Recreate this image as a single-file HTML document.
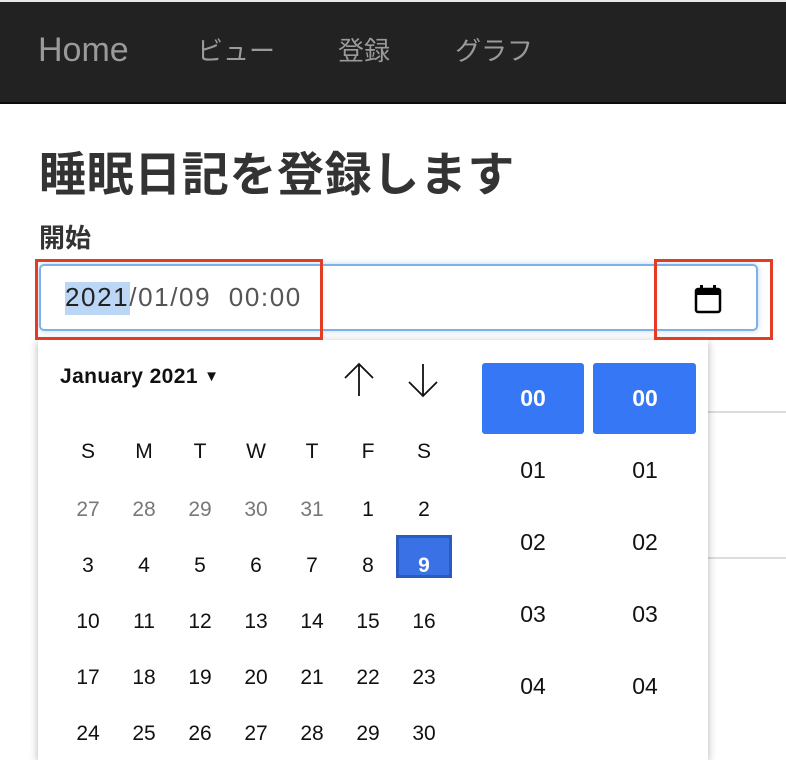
<!DOCTYPE html>
<html><head><meta charset="utf-8"><style>
*{margin:0;padding:0;box-sizing:border-box}
body{width:786px;height:748px;overflow:hidden;background:#fff;font-family:"Liberation Sans","Noto Sans CJK JP",sans-serif;position:relative}
.a{position:absolute;white-space:nowrap}
.nav{position:absolute;left:0;top:2px;width:786px;height:102px;background:#222;border-bottom:2px solid #0a0a0a}
.top{position:absolute;left:0;top:0;width:786px;height:3px;background:#e8e8e8}
.n{color:#9a9a9a;font-size:26px;top:29px}
.d{width:40px;text-align:center;font-size:21px;color:#111}
.g{color:#777}
.t{width:102px;text-align:center;font-size:23px;color:#111}
</style></head><body>
<div class="top"></div>
<div class="nav">
<div class="a n" style="left:38px;top:29px;font-size:34px">Home</div>
<div class="a n" style="left:197px">ビュー</div>
<div class="a n" style="left:338px">登録</div>
<div class="a n" style="left:455px">グラフ</div>
</div>
<div class="a" style="left:39px;top:136px;font-size:47px;font-weight:bold;color:#333;letter-spacing:0.6px">睡眠日記を登録します</div>
<div class="a" style="left:39px;top:218px;font-size:26px;font-weight:bold;color:#333">開始</div>
<div class="a" style="left:708px;top:411px;width:78px;height:2px;background:#ddd"></div>
<div class="a" style="left:708px;top:557px;width:78px;height:2px;background:#ddd"></div>
<div class="a" style="left:39px;top:264px;width:719px;height:67px;border:2px solid #7fb0e8;border-radius:5px;box-shadow:0 0 6px rgba(120,170,230,.5)"></div>
<div class="a" style="left:65px;top:282px;width:65px;height:33px;background:#bcd6f6"></div>
<div class="a" style="left:65px;top:282px;font-size:26px;color:#222;letter-spacing:1.6px">2021<span style="color:#555">/01/09&nbsp;&nbsp;00:00</span></div>
<svg class="a" style="left:694px;top:284px" width="28" height="30" viewBox="0 0 28 30"><rect x="2" y="5" width="24" height="23" rx="2" fill="none" stroke="#000" stroke-width="2.5"/><rect x="2" y="5" width="24" height="6" fill="#000"/><rect x="6" y="1" width="3" height="6" fill="#000"/><rect x="19" y="1" width="3" height="6" fill="#000"/></svg>
<div class="a" style="left:38px;top:340px;width:670px;height:420px;background:#fff;box-shadow:0 2px 8px rgba(0,0,0,.3)"></div>
<div class="a" style="left:35px;top:259px;width:288px;height:81px;border:3px solid #e33c25"></div>
<div class="a" style="left:654px;top:259px;width:119px;height:81px;border:3px solid #e33c25"></div>
<div class="a" style="left:60px;top:365px;font-size:21px;font-weight:bold;color:#111;letter-spacing:0.4px">January 2021 <span style="font-size:15px;position:relative;top:-2px">▼</span></div>
<svg class="a" style="left:343px;top:362px" width="100" height="36" viewBox="0 0 100 36"><path d="M16 34V2M2 16L16 2L30 16" fill="none" stroke="#111" stroke-width="1.8"/><path d="M80 2V34M66 20L80 34L94 20" fill="none" stroke="#111" stroke-width="1.8"/></svg>
<div class="a" style="left:482px;top:363px;width:102px;height:71px;background:#3677f5;border-radius:3px"></div>
<div class="a" style="left:593px;top:363px;width:103px;height:71px;background:#3677f5;border-radius:3px"></div>
<div class="a t" style="left:482px;top:385px;color:#fff;font-weight:bold">00</div>
<div class="a t" style="left:594px;top:385px;color:#fff;font-weight:bold">00</div>
<div class="a t" style="left:482px;top:457px">01</div><div class="a t" style="left:594px;top:457px">01</div>
<div class="a t" style="left:482px;top:529px">02</div><div class="a t" style="left:594px;top:529px">02</div>
<div class="a t" style="left:482px;top:601px">03</div><div class="a t" style="left:594px;top:601px">03</div>
<div class="a t" style="left:482px;top:673px">04</div><div class="a t" style="left:594px;top:673px">04</div>
<div class="a" style="left:396px;top:535px;width:56px;height:43px;background:#3a72e6;border:3px solid #2a5cc0"></div>
<div class="a d" style="left:68px;top:440px">S</div><div class="a d" style="left:124px;top:440px">M</div><div class="a d" style="left:180px;top:440px">T</div><div class="a d" style="left:236px;top:440px">W</div><div class="a d" style="left:292px;top:440px">T</div><div class="a d" style="left:348px;top:440px">F</div><div class="a d" style="left:404px;top:440px">S</div>
<div class="a d g" style="left:68px;top:498px">27</div><div class="a d g" style="left:124px;top:498px">28</div><div class="a d g" style="left:180px;top:498px">29</div><div class="a d g" style="left:236px;top:498px">30</div><div class="a d g" style="left:292px;top:498px">31</div><div class="a d" style="left:348px;top:498px">1</div><div class="a d" style="left:404px;top:498px">2</div>
<div class="a d" style="left:68px;top:554px">3</div><div class="a d" style="left:124px;top:554px">4</div><div class="a d" style="left:180px;top:554px">5</div><div class="a d" style="left:236px;top:554px">6</div><div class="a d" style="left:292px;top:554px">7</div><div class="a d" style="left:348px;top:554px">8</div><div class="a d" style="left:404px;top:554px;color:#fff;font-weight:bold">9</div>
<div class="a d" style="left:68px;top:610px">10</div><div class="a d" style="left:124px;top:610px">11</div><div class="a d" style="left:180px;top:610px">12</div><div class="a d" style="left:236px;top:610px">13</div><div class="a d" style="left:292px;top:610px">14</div><div class="a d" style="left:348px;top:610px">15</div><div class="a d" style="left:404px;top:610px">16</div>
<div class="a d" style="left:68px;top:666px">17</div><div class="a d" style="left:124px;top:666px">18</div><div class="a d" style="left:180px;top:666px">19</div><div class="a d" style="left:236px;top:666px">20</div><div class="a d" style="left:292px;top:666px">21</div><div class="a d" style="left:348px;top:666px">22</div><div class="a d" style="left:404px;top:666px">23</div>
<div class="a d" style="left:68px;top:722px">24</div><div class="a d" style="left:124px;top:722px">25</div><div class="a d" style="left:180px;top:722px">26</div><div class="a d" style="left:236px;top:722px">27</div><div class="a d" style="left:292px;top:722px">28</div><div class="a d" style="left:348px;top:722px">29</div><div class="a d" style="left:404px;top:722px">30</div>
</body></html>
